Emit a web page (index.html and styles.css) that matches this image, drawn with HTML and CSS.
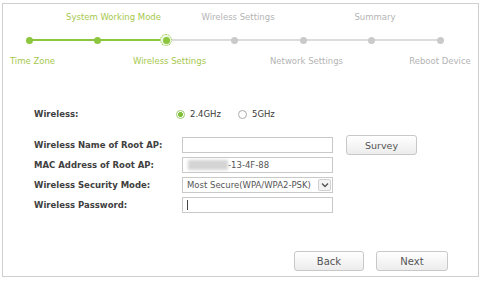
FILE: index.html
```html
<!DOCTYPE html>
<html lang="en">

<head>
    <meta charset="UTF-8">
    <meta name="viewport" content="width=device-width, initial-scale=1.0">
    <title>Quick Setup - Wireless Settings</title>
    <link rel="stylesheet" href="styles.css">
</head>

<body>
    <div class="frame">
        <div class="steps">
            <div class="track"></div>

            <span class="label top done shifted" style="grid-column: 2">System Working Mode</span>
            <span class="label top" style="grid-column: 4">Wireless Settings</span>
            <span class="label top" style="grid-column: 6">Summary</span>

            <span class="dot done" style="grid-column: 1"></span>
            <span class="dot done" style="grid-column: 2"></span>
            <span class="dot current" style="grid-column: 3"></span>
            <span class="dot" style="grid-column: 4"></span>
            <span class="dot" style="grid-column: 5"></span>
            <span class="dot" style="grid-column: 6"></span>
            <span class="dot" style="grid-column: 7"></span>

            <span class="label bottom done" style="grid-column: 1">Time Zone</span>
            <span class="label bottom done" style="grid-column: 3">Wireless Settings</span>
            <span class="label bottom" style="grid-column: 5">Network Settings</span>
            <span class="label bottom last" style="grid-column: 7">Reboot Device</span>
        </div>

        <form class="form">
            <div class="band">
                <span class="field-label">Wireless:</span>
                <div class="radios">
                    <label class="radio"><span class="circle checked"></span>2.4GHz</label>
                    <label class="radio"><span class="circle"></span>5GHz</label>
                </div>
            </div>

            <div class="fields">
                <span class="field-label">Wireless Name of Root AP:</span>
                <div class="box"></div>
                <button type="button" class="btn survey">Survey</button>

                <span class="field-label">MAC Address of Root AP:</span>
                <div class="box"><span class="blur"></span>-13-4F-88</div>

                <span class="field-label">Wireless Security Mode:</span>
                <div class="box select">Most Secure(WPA/WPA2-PSK)
                    <span class="arrow">
                        <svg width="8" height="6" viewBox="0 0 8 6"><path d="M1 1.5 L4 4.5 L7 1.5" fill="none" stroke="#555" stroke-width="1.4"/></svg>
                    </span>
                </div>

                <span class="field-label">Wireless Password:</span>
                <div class="box"><span class="caret"></span></div>
            </div>
        </form>

        <div class="footer">
            <button type="button" class="btn">Back</button>
            <button type="button" class="btn next">Next</button>
        </div>
    </div>
</body>

</html>
```

FILE: styles.css
```css
* {
    box-sizing: border-box;
}

body {
    margin: 0;
    padding: 0;
    background-color: #fff;
    font-family: 'DejaVu Sans', Verdana, sans-serif;
}

.frame {
    width: 477px;
    height: 274px;
    margin: 3px 0 0 2px;
    border: 1px solid #cfcfcf;
    display: flex;
    flex-direction: column;
}

/* stepper */
.steps {
    display: grid;
    grid-template-columns: repeat(7, 68.5px);
    grid-template-rows: 12px 23px 21px;
    margin-left: -8.25px;
    padding-top: 7px;
}

.track {
    grid-row: 2;
    grid-column: 1 / 8;
    align-self: end;
    height: 12px;
    margin: 0 34.25px;
    background: linear-gradient(to right, #8cc63f 0, #8cc63f 33.8%, #dcdcdc 33.8%, #dcdcdc 100%) center / 100% 2px no-repeat;
}

.label {
    justify-self: center;
    white-space: nowrap;
    font-size: 8.5px;
    line-height: 12px;
    color: #b4b4b4;
    margin-left: 7px;
}

.label.done {
    color: #a6c84e;
}

.label.top {
    grid-row: 1;
}

.label.bottom {
    grid-row: 3;
    align-self: end;
}

.label.shifted {
    margin-left: 32px;
}

.label.last {
    margin-left: 0;
}

.dot {
    grid-row: 2;
    align-self: end;
    justify-self: center;
    width: 12px;
    height: 12px;
    display: flex;
    align-items: center;
    justify-content: center;
}

.dot::after {
    content: '';
    width: 7px;
    height: 7px;
    border-radius: 50%;
    background-color: #cacaca;
}

.dot.done::after,
.dot.current::after {
    background-color: #8cc63f;
}

.dot.current {
    border-radius: 50%;
    border: 1px dotted #8cc63f;
    background-color: #eef7df;
}

/* form */
.form {
    margin: 40px 0 0 31px;
    font-size: 8.5px;
    color: #3a3a3a;
}

.field-label {
    grid-column: 1;
    font-weight: bold;
    color: #404040;
}

.band {
    display: grid;
    grid-template-columns: 148px auto;
    align-items: center;
    height: 14px;
}

.radios {
    display: flex;
    gap: 17px;
    margin-left: -6px;
}

.radio {
    display: flex;
    align-items: center;
    gap: 5px;
}

.circle {
    width: 9px;
    height: 9px;
    border-radius: 50%;
    border: 1px solid #aaa;
    background-color: #fff;
}

.circle.checked {
    border-color: #9cc96a;
    background: radial-gradient(circle, #7fbf3a 0, #7fbf3a 2.2px, #fff 2.6px);
}

.fields {
    display: grid;
    grid-template-columns: 148px 151px 84px;
    grid-auto-rows: 16px;
    row-gap: 4px;
    align-items: center;
    margin-top: 16px;
}

.box {
    grid-column: 2;
    height: 16px;
    border: 1px solid #c9c9c9;
    background-color: #fff;
    display: flex;
    align-items: center;
    padding-left: 4px;
    color: #555;
}

.blur {
    width: 40px;
    height: 10px;
    margin-left: 1px;
    background-color: #d4d4d4;
    filter: blur(1.5px);
}

.select {
    justify-content: space-between;
    padding-right: 1px;
}

.arrow {
    width: 13px;
    height: 12px;
    border: 1px solid #d0d0d0;
    border-radius: 2px;
    background-color: #f4f4f4;
    display: flex;
    align-items: center;
    justify-content: center;
}

.caret {
    width: 1px;
    height: 10px;
    background-color: #444;
}

.btn {
    width: 70px;
    height: 20px;
    padding: 0;
    border: 1px solid #c8c8c8;
    border-radius: 3px;
    background: linear-gradient(#ffffff, #ececec);
    font-family: 'DejaVu Sans', Verdana, sans-serif;
    font-size: 10px;
    color: #555;
}

.survey {
    grid-column: 3;
    width: 71px;
    margin-left: 13px;
    font-size: 9.5px;
}

.footer {
    margin-top: auto;
    display: flex;
    justify-content: flex-end;
    gap: 12px;
    padding: 0 30px 5px 0;
}

.next {
    width: 72px;
}
```
